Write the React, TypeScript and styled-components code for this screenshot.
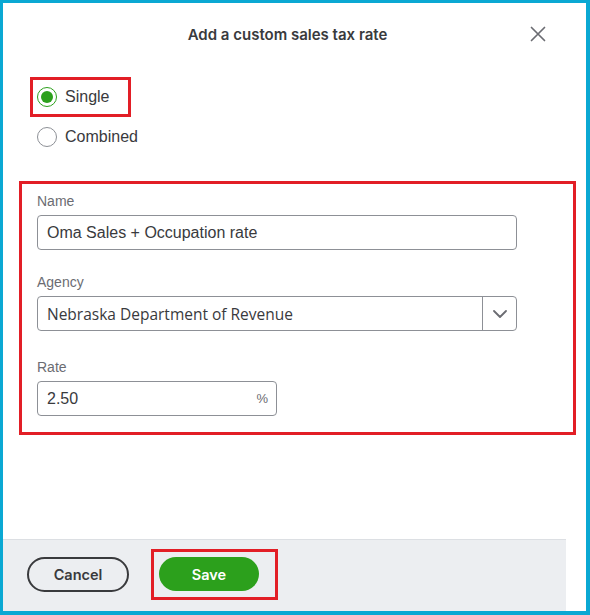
import React, { useState } from 'react';
import styled, { createGlobalStyle } from 'styled-components';

const GlobalStyle = createGlobalStyle`
  html, body {
    margin: 0;
    padding: 0;
    background: #ffffff;
  }
  * {
    box-sizing: border-box;
  }
`;

const Frame = styled.div`
  width: 590px;
  height: 615px;
  border: 3px solid #0aa8d3;
  border-right-width: 4px;
  border-bottom-width: 4px;
  background: #ffffff;
  display: flex;
`;

const Panel = styled.div`
  width: 563px;
  height: 100%;
  display: flex;
  flex-direction: column;
`;

const Header = styled.div`
  height: 62px;
  display: flex;
  align-items: center;
  justify-content: center;
  position: relative;
`;

const Title = styled.h2`
  margin: 0 0 0 6px;
  font-family: Inter, 'Noto Sans', sans-serif;
  font-size: 15px;
  font-weight: 600;
  color: #393a3d;
`;

const CloseButton = styled.button`
  position: absolute;
  right: 16px;
  top: 19px;
  width: 24px;
  height: 24px;
  padding: 0;
  border: none;
  background: none;
  cursor: pointer;
  display: flex;
  align-items: center;
  justify-content: center;
`;

const Body = styled.div`
  flex: 1;
  padding: 12px 0 0 16px;
`;

const RadioGroup = styled.div`
  margin-left: 18px;
  display: flex;
  flex-direction: column;
  align-items: flex-start;
`;

const Highlight = styled.div`
  border: 3px solid #e21e26;
`;

const SingleBox = styled(Highlight)`
  width: 101px;
  height: 40px;
  margin-left: -7px;
  padding: 0 4px;
  display: flex;
  align-items: center;
`;

const RadioRow = styled.label<{ $offset?: number }>`
  display: flex;
  align-items: center;
  gap: 8px;
  margin-top: ${p => p.$offset ?? 0}px;
  font-family: 'Liberation Sans', Arial, sans-serif;
  font-size: 16px;
  color: #393a3d;
  cursor: pointer;
`;

const RadioCircle = styled.span<{ $checked: boolean }>`
  width: 20px;
  height: 20px;
  border-radius: 50%;
  border: 1px solid ${p => (p.$checked ? '#2ca01c' : '#8d9096')};
  display: flex;
  align-items: center;
  justify-content: center;

  &::after {
    content: '';
    width: 12px;
    height: 12px;
    border-radius: 50%;
    background: ${p => (p.$checked ? '#2ca01c' : 'transparent')};
  }
`;

const FormBox = styled(Highlight)`
  width: 557px;
  margin-top: 34px;
  padding: 9px 0 16px 15px;
`;

const Field = styled.div<{ $space?: number }>`
  margin-top: ${p => p.$space ?? 0}px;
`;

const Label = styled.div`
  font-family: 'Liberation Sans', Arial, sans-serif;
  font-size: 14px;
  line-height: 16px;
  color: #6b6c72;
  margin-bottom: 6px;
`;

const InputShell = styled.div<{ $width: number }>`
  width: ${p => p.$width}px;
  height: 35px;
  border: 1px solid #8d9096;
  border-radius: 4px;
  display: flex;
  align-items: center;
  background: #fff;
`;

const TextInput = styled.input`
  flex: 1;
  min-width: 0;
  height: 100%;
  border: none;
  outline: none;
  background: transparent;
  padding: 0 0 0 9px;
  font-family: 'Liberation Sans', Arial, sans-serif;
  font-size: 16px;
  color: #393a3d;
`;

const SelectValue = styled.div`
  flex: 1;
  padding-left: 9px;
  font-family: 'Open Sans', 'Liberation Sans', sans-serif;
  font-size: 15.5px;
  color: #393a3d;
`;

const SelectToggle = styled.div`
  width: 34px;
  height: 100%;
  border-left: 1px solid #8d9096;
  display: flex;
  align-items: center;
  justify-content: center;
`;

const Suffix = styled.span`
  padding-right: 8px;
  font-family: 'Liberation Sans', Arial, sans-serif;
  font-size: 13px;
  color: #6b6c72;
`;

const Footer = styled.div`
  height: 72px;
  background: #eceef1;
  border-top: 1px solid #dcdfe3;
  display: flex;
  align-items: center;
  padding: 0 0 3px 24px;
`;

const PillButton = styled.button<{ $primary?: boolean }>`
  width: ${p => (p.$primary ? 100 : 102)}px;
  height: ${p => (p.$primary ? 34 : 35)}px;
  border-radius: 18px;
  border: ${p => (p.$primary ? 'none' : '2px solid #393a3d')};
  background: ${p => (p.$primary ? '#2ca01c' : 'transparent')};
  color: ${p => (p.$primary ? '#ffffff' : '#393a3d')};
  font-family: Inter, 'Noto Sans', sans-serif;
  font-size: 14.5px;
  font-weight: 600;
  cursor: pointer;
`;

const SaveBox = styled(Highlight)`
  margin-left: 22px;
  width: 127px;
  height: 51px;
  padding-left: 5px;
  display: flex;
  align-items: center;
`;

const CloseIcon = () => (
  <svg width="16" height="16" viewBox="0 0 16 16">
    <path d="M1.5 1.5 L14.5 14.5 M14.5 1.5 L1.5 14.5" stroke="#6b6c72" strokeWidth="1.7" strokeLinecap="round" />
  </svg>
);

const Chevron = () => (
  <svg width="14" height="8" viewBox="0 0 14 8">
    <path d="M1 1 L7 7 L13 1" fill="none" stroke="#6b6c72" strokeWidth="1.8" strokeLinecap="round" strokeLinejoin="round" />
  </svg>
);

const App: React.FC = () => {
  const [mode, setMode] = useState<'single' | 'combined'>('single');
  const [name, setName] = useState('Oma Sales + Occupation rate');
  const [rate, setRate] = useState('2.50');

  return (
    <>
      <GlobalStyle />
      <Frame>
        <Panel>
          <Header>
            <Title>Add a custom sales tax rate</Title>
            <CloseButton aria-label="Close">
              <CloseIcon />
            </CloseButton>
          </Header>

          <Body>
            <RadioGroup>
              <SingleBox>
                <RadioRow onClick={() => setMode('single')}>
                  <RadioCircle $checked={mode === 'single'} />
                  Single
                </RadioRow>
              </SingleBox>
              <RadioRow $offset={10} onClick={() => setMode('combined')}>
                <RadioCircle $checked={mode === 'combined'} />
                Combined
              </RadioRow>
            </RadioGroup>

            <FormBox>
              <Field>
                <Label>Name</Label>
                <InputShell $width={480}>
                  <TextInput value={name} onChange={e => setName(e.target.value)} />
                </InputShell>
              </Field>

              <Field $space={24}>
                <Label>Agency</Label>
                <InputShell $width={480}>
                  <SelectValue>Nebraska Department of Revenue</SelectValue>
                  <SelectToggle>
                    <Chevron />
                  </SelectToggle>
                </InputShell>
              </Field>

              <Field $space={28}>
                <Label>Rate</Label>
                <InputShell $width={240}>
                  <TextInput value={rate} onChange={e => setRate(e.target.value)} />
                  <Suffix>%</Suffix>
                </InputShell>
              </Field>
            </FormBox>
          </Body>

          <Footer>
            <PillButton>Cancel</PillButton>
            <SaveBox>
              <PillButton $primary>Save</PillButton>
            </SaveBox>
          </Footer>
        </Panel>
      </Frame>
    </>
  );
};

export default App;
